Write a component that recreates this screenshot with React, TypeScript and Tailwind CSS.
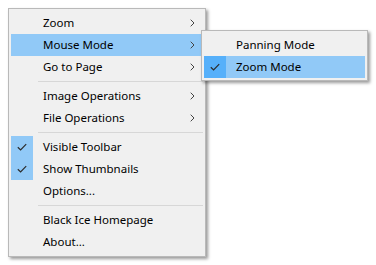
import React from "react";

type Item =
  | { kind: "sep" }
  | { kind: "item"; label: string; sub?: boolean; checked?: boolean; hover?: boolean };

const Check = () => (
  <svg width="10" height="8" viewBox="0 0 10 8" fill="none">
    <path d="M0.8 4.2 L3.6 6.9 L9.2 1.1" stroke="#2b2b2b" strokeWidth="1.2" />
  </svg>
);

const Chevron = () => (
  <svg width="5" height="8" viewBox="0 0 5 8" fill="none">
    <path d="M0.7 0.7 L4 4 L0.7 7.3" stroke="#444" strokeWidth="1" />
  </svg>
);

function Row({ item }: { item: Extract<Item, { kind: "item" }> }) {
  const checkBg = item.checked ? (item.hover ? "bg-[#56b0fa]" : "bg-[#91c9f7]") : "";
  return (
    <div className={`flex h-[22px] items-center ${item.hover ? "bg-[#91c9f7]" : ""}`}>
      <div className={`flex h-[22px] w-[22px] shrink-0 items-center justify-center ${checkBg}`}>
        {item.checked && <Check />}
      </div>
      <div className="ml-[10px] flex-1 whitespace-nowrap text-[11.5px] leading-none text-black">{item.label}</div>
      {item.sub && (
        <div className="mr-[8px] flex items-center">
          <Chevron />
        </div>
      )}
    </div>
  );
}

function Menu({ items, className }: { items: Item[]; className: string }) {
  return (
    <div
      className={`border border-[#b9b9b9] bg-[#f0f0f0] px-[2px] pt-[3px] pb-[2px] shadow-[2px_2px_3px_rgba(0,0,0,0.4)] ${className}`}
    >
      {items.map((it, i) =>
        it.kind === "sep" ? (
          <div key={i} className="flex h-[7px] items-center pl-[27px]">
            <div className="h-px w-full bg-[#d7d7d7]" />
          </div>
        ) : (
          <Row key={i} item={it} />
        )
      )}
    </div>
  );
}

export default function App() {
  const main: Item[] = [
    { kind: "item", label: "Zoom", sub: true },
    { kind: "item", label: "Mouse Mode", sub: true, hover: true },
    { kind: "item", label: "Go to Page", sub: true },
    { kind: "sep" },
    { kind: "item", label: "Image Operations", sub: true },
    { kind: "item", label: "File Operations", sub: true },
    { kind: "sep" },
    { kind: "item", label: "Visible Toolbar", checked: true },
    { kind: "item", label: "Show Thumbnails", checked: true },
    { kind: "item", label: "Options..." },
    { kind: "sep" },
    { kind: "item", label: "Black Ice Homepage" },
    { kind: "item", label: "About..." },
  ];
  const sub: Item[] = [
    { kind: "item", label: "Panning Mode" },
    { kind: "item", label: "Zoom Mode", checked: true, hover: true },
  ];
  return (
    <div
      className="relative h-[265px] w-[376px] overflow-hidden bg-white"
      style={{ fontFamily: '"Noto Sans", "Open Sans", Arial, sans-serif' }}
    >
      <Menu items={main} className="ml-[8px] mt-[8px] w-[198px] pb-[3px]" />
      <Menu items={sub} className="absolute left-[201px] top-[30px] w-[167px]" />
    </div>
  );
}
